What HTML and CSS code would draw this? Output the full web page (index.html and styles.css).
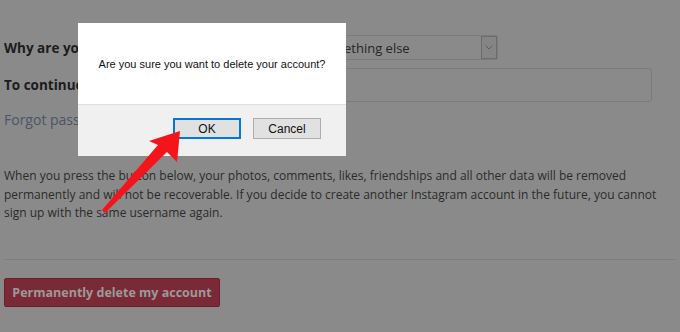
FILE: index.html
```html
<!DOCTYPE html>
<html lang="en">
<head>
    <meta charset="UTF-8">
    <title>Delete Your Account</title>
    <link rel="stylesheet" href="styles.css">
</head>
<body>
    <div class="page">
        <form class="delete-form">
            <div class="form-row">
                <label for="reason">Why are you deleting your account?</label>
                <div class="select-wrap">
                    <span class="select-text">Something else</span>
                    <span class="select-arrow">
                        <svg width="8" height="5" viewBox="0 0 8 5"><path d="M0.5 0.5 L4 4 L7.5 0.5" fill="none" stroke="#5c5c5c" stroke-width="1"/></svg>
                    </span>
                </div>
            </div>
            <div class="form-row">
                <label for="password">To continue, please re-enter your password</label>
                <div class="text-input"></div>
            </div>
            <a class="forgot" href="#">Forgot password?</a>
        </form>

        <p class="warning">When you press the button below, your photos, comments, likes, friendships and all other data will be removed permanently and will not be recoverable. If you decide to create another Instagram account in the future, you cannot sign up with the same username again.</p>

        <div class="actions">
            <button class="delete-btn" type="button">Permanently delete my account</button>
        </div>
    </div>

    <div class="dialog">
        <div class="dialog-body">Are you sure you want to delete your account?</div>
        <div class="dialog-footer">
            <button class="dlg-btn dlg-ok" type="button">OK</button>
            <button class="dlg-btn" type="button">Cancel</button>
        </div>
    </div>

    <svg class="arrow" width="680" height="332" viewBox="0 0 680 332">
        <polygon points="180,131 177,162 167,152 105,213 102,210 158,145 149,141" fill="#f3151a"/>
    </svg>
</body>
</html>
```

FILE: styles.css
```css
body {
    margin: 0;
    padding: 0;
    background-color: #8a8a8a;
    font-family: 'Open Sans', sans-serif;
    width: 680px;
    height: 332px;
    overflow: hidden;
    position: relative;
}
.page {
    padding: 0 4px;
}
.delete-form {
    padding-top: 35px;
}
.form-row {
    display: grid;
    grid-template-columns: 306px 1fr;
    align-items: center;
    margin-bottom: 8px;
}
.form-row label {
    font-weight: 700;
    font-size: 13.5px;
    color: #1c1c1c;
    white-space: nowrap;
    overflow: hidden;
}
.select-wrap {
    width: 188px;
    height: 25px;
    box-sizing: border-box;
    border: 1px solid #7b7b7b;
    border-radius: 2px;
    display: flex;
    align-items: center;
    justify-content: space-between;
}
.select-text {
    font-size: 13px;
    color: #262626;
    padding-left: 6px;
}
.select-arrow {
    width: 16px;
    height: 23px;
    box-sizing: border-box;
    border: 1px solid #6c6c6c;
    background: #858585;
    display: flex;
    align-items: center;
    justify-content: center;
}
.text-input {
    width: 342px;
    height: 34px;
    box-sizing: border-box;
    border: 1px solid #7b7b7b;
    border-radius: 3px;
}
.forgot {
    display: block;
    margin-top: 4px;
    font-size: 14px;
    color: #4a5568;
    text-decoration: none;
}
.warning {
    margin: 38px 0 0;
    font-size: 12px;
    line-height: 18.5px;
    color: #2b2b2b;
}
.actions {
    margin-top: 36px;
    border-top: 1px solid #7e7e7e;
    padding-top: 18px;
}
.delete-btn {
    width: 216px;
    height: 29px;
    background-color: #7a2a37;
    border: 1px solid #6a1f2b;
    border-radius: 2px;
    color: #9a9a9a;
    font-family: 'Open Sans', sans-serif;
    font-weight: 700;
    font-size: 12.5px;
    padding: 0;
}
.dialog {
    position: absolute;
    left: 78px;
    top: 23px;
    width: 268px;
    height: 133px;
    display: flex;
    flex-direction: column;
    background: #fff;
    font-family: 'Liberation Sans', Arial, sans-serif;
    color: #111;
}
.dialog-body {
    height: 81px;
    display: flex;
    align-items: center;
    justify-content: center;
    font-size: 11px;
}
.dialog-footer {
    flex: 1;
    background: #f0f0f0;
    border-top: 1px solid #dfdfdf;
    display: flex;
    justify-content: flex-end;
    align-items: flex-start;
    gap: 12px;
    padding: 13px 25px 0 0;
}
.dlg-btn {
    width: 68px;
    height: 21px;
    box-sizing: border-box;
    background: #e1e1e1;
    border: 1px solid #adadad;
    font-family: 'Liberation Sans', Arial, sans-serif;
    font-size: 12px;
    color: #111;
    padding: 0;
}
.dlg-ok {
    border: 2px solid #0078d7;
}
.arrow {
    position: absolute;
    left: 0;
    top: 0;
}
```
